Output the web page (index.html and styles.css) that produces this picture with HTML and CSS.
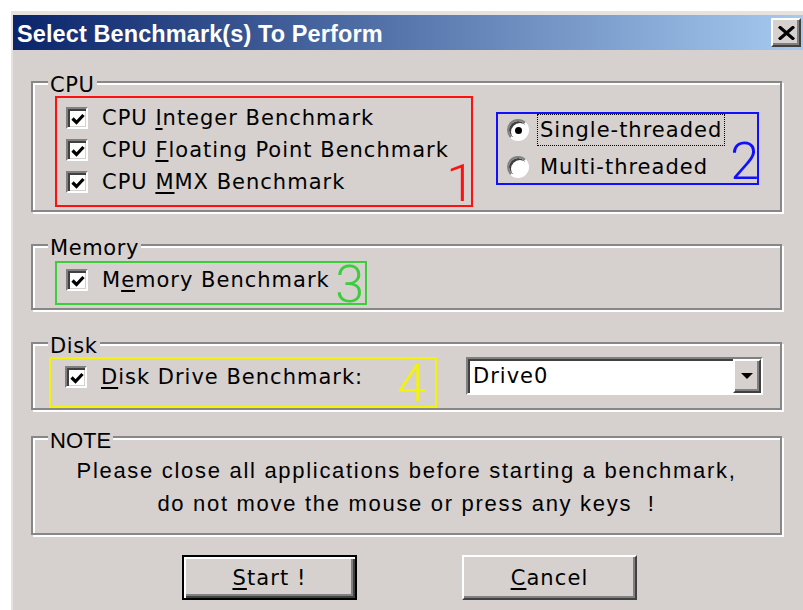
FILE: index.html
```html
<!DOCTYPE html>
<html lang="en">
<head>
<meta charset="utf-8">
<title>Select Benchmark(s) To Perform</title>
<link rel="stylesheet" href="styles.css">
</head>
<body>
<div class="window">
  <div class="titlebar">
    <span class="title">Select Benchmark(s) To Perform</span>
    <button class="close" type="button" aria-label="Close">
      <svg width="17" height="14" viewBox="0 0 17 14"><path d="M1 0.5 L16 13.5 M16 0.5 L1 13.5" stroke="#000" stroke-width="3.2" fill="none"/></svg>
    </button>
  </div>

  <div class="dialog-body">
    <section class="group group-cpu">
      <div class="group-label">CPU</div>
      <div class="cpu-row">
        <div class="mark mark-red">
          <div class="check-row"><span class="checkbox"><svg width="14" height="12" viewBox="0 0 14 12"><polyline points="1.5,5.5 5.5,9.5 12.5,2" stroke="#000" stroke-width="3.2" fill="none"/></svg></span><span>CPU <u>I</u>nteger Benchmark</span></div>
          <div class="check-row"><span class="checkbox"><svg width="14" height="12" viewBox="0 0 14 12"><polyline points="1.5,5.5 5.5,9.5 12.5,2" stroke="#000" stroke-width="3.2" fill="none"/></svg></span><span>CPU <u>F</u>loating Point Benchmark</span></div>
          <div class="check-row"><span class="checkbox"><svg width="14" height="12" viewBox="0 0 14 12"><polyline points="1.5,5.5 5.5,9.5 12.5,2" stroke="#000" stroke-width="3.2" fill="none"/></svg></span><span>CPU <u>M</u>MX Benchmark</span></div>
          <span class="tag tag-red">1</span>
        </div>
        <div class="mark mark-blue">
          <div class="radio-row"><span class="radio checked"></span><span class="radio-text focus">Single-threaded</span></div>
          <div class="radio-row"><span class="radio"></span><span class="radio-text">Multi-threaded</span></div>
          <span class="tag tag-blue">2</span>
        </div>
      </div>
    </section>

    <section class="group group-mem">
      <div class="group-label">Memory</div>
      <div class="mark mark-green">
        <div class="check-row"><span class="checkbox"><svg width="14" height="12" viewBox="0 0 14 12"><polyline points="1.5,5.5 5.5,9.5 12.5,2" stroke="#000" stroke-width="3.2" fill="none"/></svg></span><span>M<u>e</u>mory Benchmark</span></div>
        <span class="tag tag-green">3</span>
      </div>
    </section>

    <section class="group group-disk">
      <div class="group-label">Disk</div>
      <div class="disk-row">
        <div class="mark mark-yellow">
          <div class="check-row"><span class="checkbox"><svg width="14" height="12" viewBox="0 0 14 12"><polyline points="1.5,5.5 5.5,9.5 12.5,2" stroke="#000" stroke-width="3.2" fill="none"/></svg></span><span><u>D</u>isk Drive Benchmark:</span></div>
          <span class="tag tag-yellow">4</span>
        </div>
        <div class="combo">
          <span class="combo-value">Drive0</span>
          <span class="combo-button"><span class="arrow"></span></span>
        </div>
      </div>
    </section>

    <section class="group group-note">
      <div class="group-label note-label">NOTE</div>
      <p class="note-text">Please close all applications before starting a benchmark,<br>do not move the mouse or press any keys&nbsp; !</p>
    </section>

    <div class="actions">
      <button class="btn btn-default" type="button"><u>S</u>tart !</button>
      <button class="btn" type="button"><u>C</u>ancel</button>
    </div>
  </div>
</div>
</body>
</html>
```
FILE: styles.css
```css
html, body {
  margin: 0;
  background: #fff;
  overflow: hidden;
}

body {
  width: 803px;
  height: 610px;
  font-family: "DejaVu Sans", sans-serif;
  font-size: 21px;
  letter-spacing: 1px;
  color: #000;
}

u {
  text-decoration-thickness: 2px;
  text-underline-offset: 3px;
}

/* window frame */
.window {
  margin: 11px 0 0 11px;
  width: 790px;
  height: 620px;
  border-top: 4px solid #e6e2df;
  border-left: 2px solid #e6e2df;
  background: #d6d0ce;
}

.titlebar {
  height: 35px;
  box-sizing: border-box;
  padding: 3px 0 0 4px;
  display: flex;
  align-items: flex-start;
  background: linear-gradient(90deg, #0a246a 0%, #a6caf0 100%);
}

.title {
  color: #fff;
  font-family: "Liberation Sans", Arial, sans-serif;
  font-weight: bold;
  font-size: 23.5px;
  letter-spacing: 0.1px;
  line-height: 32px;
}

.close {
  margin: 0 2px 0 auto;
  width: 30px;
  height: 29px;
  padding: 0;
  box-sizing: border-box;
  background: #d6d0ce;
  border: 2px solid;
  border-color: #fff #404040 #404040 #fff;
  box-shadow: inset -2px -2px 0 #808080;
  display: flex;
  align-items: center;
  justify-content: center;
}

/* dialog contents */
.dialog-body {
  padding: 0 21px 0 18px;
}

.group {
  margin-top: 32px;
  border: 2px solid #878787;
  box-shadow: inset 2px 2px 0 #fff, 2px 2px 0 #fff;
}

.group-label {
  width: fit-content;
  margin: -8px 0 0 15px;
  padding: 0 2px;
  line-height: 21px;
  letter-spacing: 0.6px;
  background: #d6d0ce;
}

.group-cpu {
  margin-top: 31px;
  padding-bottom: 3px;
}

.group-mem {
  padding-bottom: 3px;
}

.group-disk {
  padding-bottom: 0;
}

.group-note {
  margin-top: 26px;
  padding-bottom: 13px;
}

.cpu-row {
  display: flex;
  align-items: flex-start;
  gap: 23px;
  margin-left: 22px;
}

.disk-row {
  display: flex;
  align-items: flex-start;
  margin-left: 16px;
}

/* coloured annotation frames */
.mark {
  position: relative;
  box-sizing: border-box;
  border: 2px solid;
}

.mark-red {
  border-color: #ff1010;
  width: 418px;
  padding: 4px 0 7px 9px;
}

.mark-blue {
  border-color: #1010ff;
  width: 263px;
  margin-top: 16px;
  padding-left: 9px;
  display: flex;
  flex-direction: column;
  gap: 5px;
}

.mark-green {
  border-color: #3ccc3c;
  width: 312px;
  margin: 2px 0 0 22px;
  padding: 1px 0 7px 9px;
}

.mark-yellow {
  border-color: #f2f20a;
  width: 388px;
  padding: 2px 0 13px 14px;
}

.tag {
  position: absolute;
  font-family: Roboto, "Liberation Sans", sans-serif;
  font-weight: 300;
  font-size: 52px;
  line-height: 52px;
  letter-spacing: 0;
}

.tag-red { color: #ff1010; right: -4px; bottom: -5px; }
.tag-blue { color: #1010ff; right: -2px; bottom: -5px; }
.tag-green { color: #3ccc3c; right: 1px; bottom: -8px; }
.tag-yellow { color: #f2f20a; right: 9px; bottom: -4px; }

/* check boxes */
.check-row {
  display: flex;
  align-items: center;
  gap: 14px;
  height: 32px;
}

.checkbox {
  flex: none;
  width: 22px;
  height: 22px;
  box-sizing: border-box;
  background: #fff;
  border: 2px solid;
  border-color: #808080 #fff #fff #808080;
  box-shadow: inset 2px 2px 0 #404040, inset -1px -1px 0 #d6d0ce;
  display: flex;
  align-items: center;
  justify-content: center;
  padding: 2px 0 0 1px;
}

/* radio buttons */
.radio-row {
  display: flex;
  align-items: center;
  height: 32px;
}

.radio {
  flex: none;
  position: relative;
  width: 22px;
  height: 22px;
  box-sizing: border-box;
  border-radius: 50%;
  background: #fff;
  border: 2px solid;
  border-color: #808080 #fff #fff #808080;
  box-shadow: inset 2px 2px 0 #404040;
}

.radio.checked::after {
  content: "";
  position: absolute;
  left: 6px;
  top: 6px;
  width: 7px;
  height: 7px;
  border-radius: 50%;
  background: #000;
}

.radio-text {
  margin-left: 8px;
  padding: 0 2px;
  line-height: 30px;
  border: 1px solid transparent;
}

.radio-text.focus {
  border: 1px dotted #000;
}

/* drive selector */
.combo {
  margin-left: 29px;
  width: 297px;
  height: 38px;
  box-sizing: border-box;
  background: #fff;
  border: 2px solid;
  border-color: #808080 #fff #fff #808080;
  box-shadow: inset 2px 2px 0 #404040;
  display: flex;
  align-items: center;
  padding-left: 5px;
}

.combo-button {
  margin-left: auto;
  width: 28px;
  height: 34px;
  box-sizing: border-box;
  background: #d6d0ce;
  border: 2px solid;
  border-color: #fff #404040 #404040 #fff;
  box-shadow: inset -2px -2px 0 #808080;
  display: flex;
  align-items: center;
  justify-content: center;
}

.arrow {
  width: 0;
  height: 0;
  border-left: 6px solid transparent;
  border-right: 6px solid transparent;
  border-top: 6px solid #000;
}

/* note */
.note-label {
  font-family: "Liberation Sans", Arial, sans-serif;
  font-size: 22px;
  letter-spacing: 0;
}

.note-text {
  margin: 3px 0 0;
  font-family: "Liberation Sans", Arial, sans-serif;
  font-size: 22px;
  letter-spacing: 1.7px;
  line-height: 33px;
  text-align: center;
}

/* buttons */
.actions {
  display: flex;
  gap: 105px;
  margin-top: 20px;
  padding-left: 151px;
}

.btn {
  width: 175px;
  height: 45px;
  box-sizing: border-box;
  padding: 0;
  font-family: "DejaVu Sans", sans-serif;
  font-size: 21px;
  letter-spacing: 1.1px;
  color: #000;
  background: #d6d0ce;
  border: 2px solid;
  border-color: #fff #404040 #404040 #fff;
  box-shadow: inset -2px -2px 0 #808080;
}

.btn-default {
  border: 2px solid #000;
  box-shadow: inset 2px 2px 0 #fff, inset -2px -2px 0 #404040, inset -4px -4px 0 #808080;
}
```
